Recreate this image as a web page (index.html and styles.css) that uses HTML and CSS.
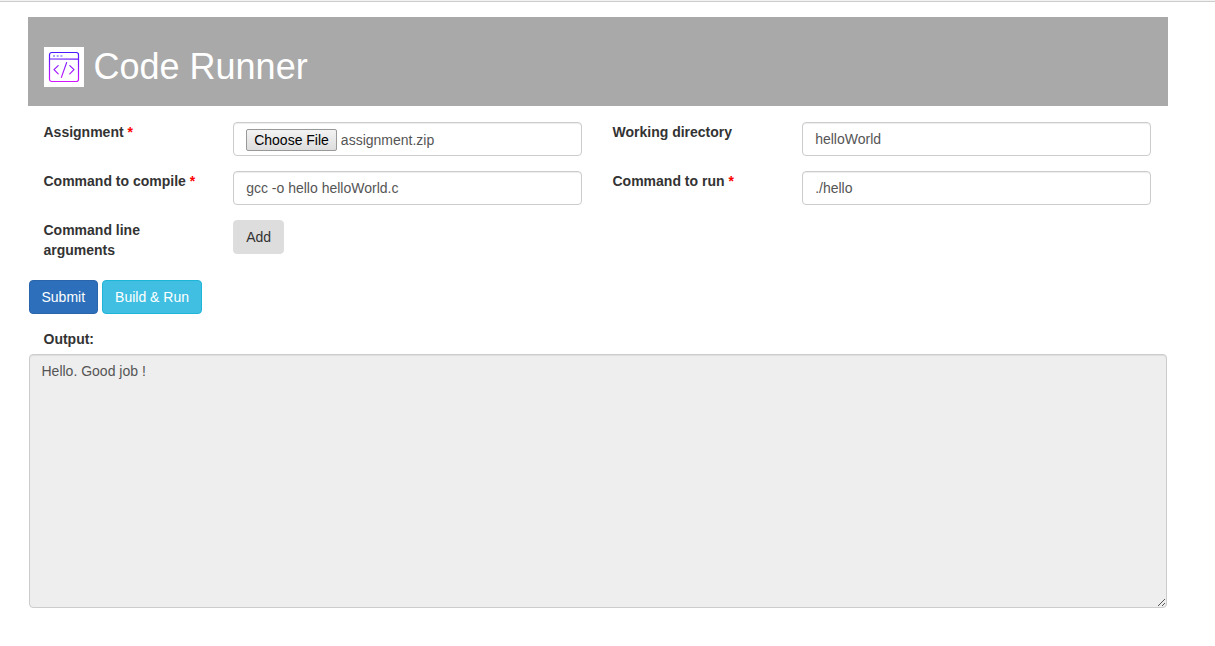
FILE: index.html
```html
<!DOCTYPE html>
<html lang="en">
<head>
<meta charset="utf-8">
<title>Code Runner</title>
<link rel="stylesheet" href="styles.css">
</head>
<body>
<div class="topline"></div>
<header class="banner">
  <svg class="logo" width="40" height="40" viewBox="0 0 40 40" fill="none">
    <defs>
      <linearGradient id="ink" gradientUnits="userSpaceOnUse" x1="0" y1="5" x2="0" y2="35">
        <stop offset="0" stop-color="#4a1aff"/>
        <stop offset="1" stop-color="#d416ff"/>
      </linearGradient>
    </defs>
    <rect width="40" height="40" fill="#fff"/>
    <g stroke="url(#ink)" stroke-width="1.2" stroke-linecap="round" stroke-linejoin="round">
      <rect x="5.5" y="5.5" width="29" height="29" rx="2.2"/>
      <path d="M5.5 12L34.5 12.1M14.2 18.6L10 22.6L14.2 26.8M25.8 18.6L30 22.6L25.8 26.8M22.6 15.6L17.4 30.4"/>
    </g>
    <path d="M9 9h2M12.7 9h2M16.4 9h2" stroke="#aaa2ff" stroke-width="2"/>
  </svg>
  <h1 class="title">Code Runner</h1>
</header>
<form class="form">
  <div class="row">
    <label class="label">Assignment <span class="required">*</span></label>
    <div class="cell"><div class="control file"><button type="button" class="choose">Choose File</button><span>assignment.zip</span></div></div>
    <label class="label">Working directory</label>
    <div class="cell"><input class="control" type="text" value="helloWorld"></div>
  </div>
  <div class="row">
    <label class="label">Command to compile <span class="required">*</span></label>
    <div class="cell"><input class="control" type="text" value="gcc -o hello helloWorld.c"></div>
    <label class="label">Command to run <span class="required">*</span></label>
    <div class="cell"><input class="control" type="text" value="./hello"></div>
  </div>
  <div class="row arguments">
    <label class="label">Command line arguments</label>
    <div class="cell"><button type="button" class="btn add">Add</button></div>
  </div>
  <div class="actions">
    <button type="button" class="btn submit">Submit</button>
    <button type="button" class="btn build">Build &amp; Run</button>
  </div>
  <label class="label output-label">Output:</label>
  <div class="output-wrap">
    <textarea class="control output" readonly>Hello. Good job !</textarea>
    <svg class="grip" width="8" height="8" viewBox="0 0 8 8" shape-rendering="crispEdges">
      <path d="M0 7h1v1H0zM1 6h1v1H1zM2 5h1v1H2zM3 4h1v1H3zM4 3h1v1H4zM5 2h1v1H5zM6 1h1v1H6zM4 7h1v1H4zM5 6h1v1H5zM6 5h1v1H6z" fill="#555"/>
    </svg>
  </div>
</form>
</body>
</html>
```
FILE: styles.css
```css
* { box-sizing: border-box; }

body {
  margin: 0;
  background: #fff;
  color: #333;
  font: 14px/20px "Liberation Sans", Arial, sans-serif;
}

.topline {
  height: 2px;
  margin-bottom: 15px;
  background: #f2f2f2;
  border-bottom: 1px solid #ccc;
}

.banner {
  display: flex;
  align-items: center;
  gap: 9.5px;
  width: 1140px;
  height: 89px;
  margin-left: 28px;
  padding: 11px 16px 0;
  background: #a9a9a9;
}

.logo { flex: none; }

.title {
  margin: 0;
  color: #fff;
  font-size: 36px;
  font-weight: 400;
  line-height: 40px;
}

.form {
  width: 1138px;
  margin: 16px 0 0 28.5px;
}

.row {
  display: grid;
  grid-template-columns: 2fr 4fr 2fr 4fr;
  margin-bottom: 15px;
}

.arguments { margin-bottom: 20px; }

.label {
  padding: 0 15px;
  font-weight: 700;
}

.required { color: #f00; }

.cell { padding: 0 15.5px 0 15px; }

.control {
  display: block;
  width: 100%;
  height: 34px;
  padding: 6px 12px;
  border: 1px solid #ccc;
  border-radius: 4px;
  outline: none;
  background: #fff;
  box-shadow: inset 0 1px 1px rgba(0, 0, 0, .075);
  color: #555;
  font: inherit;
}

.file {
  display: flex;
  gap: 4px;
}

.file span { padding-top: 1px; }

.choose {
  height: 22px;
  padding: 0 7px;
  border: 1px solid #999;
  border-radius: 2px;
  background: linear-gradient(#f3f3f3, #ddd);
  color: #000;
  font: inherit;
}

.btn {
  height: 34px;
  padding: 6px 12px;
  border: 1px solid transparent;
  border-radius: 4px;
  font: inherit;
}

.add {
  display: block;
  border-color: #ddd;
  background: #ddd;
  color: #333;
}

.actions {
  display: flex;
  gap: 4px;
  margin-bottom: 15px;
}

.submit {
  border-color: #2a64ab;
  background: #2d6fba;
  color: #fff;
}

.build {
  border-color: #1fb5d8;
  background: #40bfe2;
  color: #fff;
}

.output-label {
  display: block;
  margin-bottom: 5px;
}

.output-wrap { position: relative; }

.output {
  height: 254px;
  background: #eee;
  resize: none;
}

.grip {
  position: absolute;
  right: 1px;
  bottom: 2px;
}
```
